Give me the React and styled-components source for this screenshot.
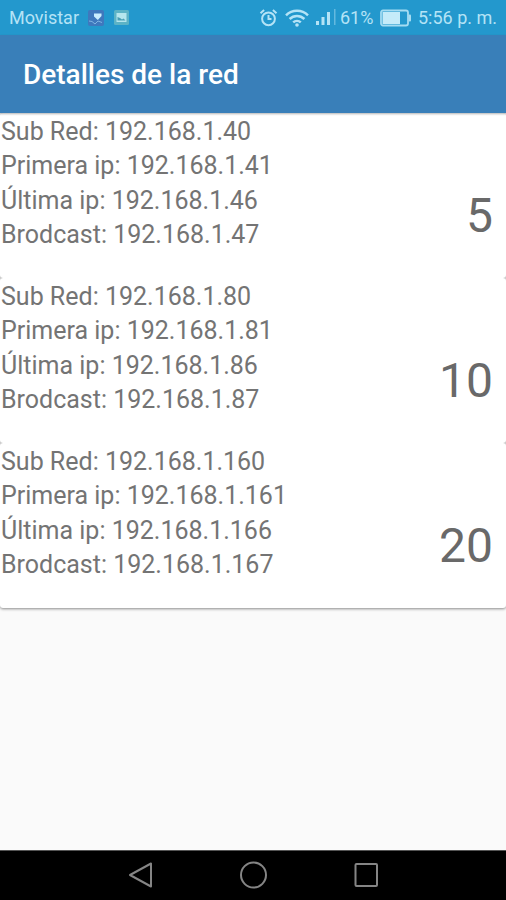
import React from 'react'
import styled, { createGlobalStyle } from 'styled-components'

const subnets = [
  { hosts: 5, network: '192.168.1.40', first: '192.168.1.41', last: '192.168.1.46', broadcast: '192.168.1.47' },
  { hosts: 10, network: '192.168.1.80', first: '192.168.1.81', last: '192.168.1.86', broadcast: '192.168.1.87' },
  { hosts: 20, network: '192.168.1.160', first: '192.168.1.161', last: '192.168.1.166', broadcast: '192.168.1.167' },
]

function PhoneStatus() {
  return (
    <StatusBar>
      <Carrier>Movistar</Carrier>
      <Notification width="16" height="16" viewBox="0 0 16 16">
        <rect width="16" height="16" rx="2" fill="#3f78bd" />
        <path d="M6 3.500h7.500v2.500L9.800 10 6 6.500z" fill="#c9edff" />
        <path d="M1 11l3 .5 3 2.500 3-3 4 1.500" fill="none" stroke="#7fb4e3" />
      </Notification>
      <Notification width="15" height="15" viewBox="0 0 15 15">
        <rect width="15" height="15" rx="1.500" fill="#5cb3c6" />
        <rect x="2.500" y="3" width="10" height="9" fill="#b5e6ee" />
        <path d="M3.500 10.500V7l2.500 1 2 1.500 1.500-1 2 2z" fill="#4a9fb5" />
      </Notification>
      <StatusRight>
        <svg width="20" height="20" viewBox="0 0 20 20" fill="none" stroke="#b4e3f6" strokeWidth="2">
          <circle cx="9.500" cy="10.800" r="6.400" />
          <path d="M9.500 7v4h3M1.500 5.200L5.100 2M17.500 5.200L13.900 2" />
        </svg>
        <Wifi width="24" height="18" viewBox="0 0 24 18" fill="none" stroke="#b4e3f6" strokeWidth="2.500">
          <path d="M1 6.300a15.800 15.800 0 0 1 22 0M4.600 10a10.500 10.500 0 0 1 14.800 0M8.200 13.400a5.500 5.500 0 0 1 7.600 0" />
          <circle cx="12" cy="16" r="1.800" fill="#b4e3f6" stroke="none" />
        </Wifi>
        <Signal width="21" height="17" viewBox="0 0 21 17" fill="#b4e3f6">
          <rect x="0" y="12" width="3" height="4" />
          <rect x="5.500" y="8" width="3" height="8" />
          <rect x="11" y="3" width="3" height="13" />
          <rect x="18" y="0" width="1.500" height="16" opacity="0.45" />
        </Signal>
        <Percent>61%</Percent>
        <Battery width="32" height="18" viewBox="0 0 32 18">
          <rect x="1" y="1.500" width="27" height="15" rx="2" fill="none" stroke="#a5dcf2" strokeWidth="1.800" />
          <rect x="2.500" y="3" width="17.500" height="12" fill="#c5ebf9" />
          <rect x="28.500" y="5.500" width="2.500" height="7" rx="1" fill="#a5dcf2" />
        </Battery>
        <Clock>5:56 p. m.</Clock>
      </StatusRight>
    </StatusBar>
  )
}

function SubnetCard({ subnet }) {
  return (
    <Card>
      <Lines>
        <Line>Sub Red: {subnet.network}</Line>
        <Line>Primera ip: {subnet.first}</Line>
        <Line>Última ip: {subnet.last}</Line>
        <Line>Brodcast: {subnet.broadcast}</Line>
      </Lines>
      <Hosts>{subnet.hosts}</Hosts>
    </Card>
  )
}

function App() {
  return (
    <Screen>
      <GlobalStyle />
      <PhoneStatus />
      <Toolbar>
        <Title>Detalles de la red</Title>
      </Toolbar>
      <List>
        {subnets.map(subnet => (
          <SubnetCard key={subnet.network} subnet={subnet} />
        ))}
      </List>
      <NavBar>
        <svg width="28" height="28" viewBox="0 0 28 28">
          <path d="M3 14L24 2.500v23z" />
        </svg>
        <svg width="28" height="28" viewBox="0 0 28 28">
          <circle cx="14.500" cy="14" r="12.500" />
        </svg>
        <svg width="28" height="28" viewBox="0 0 28 28">
          <rect x="3.500" y="3" width="21.500" height="22" rx="1" />
        </svg>
      </NavBar>
    </Screen>
  )
}

export default App

const GlobalStyle = createGlobalStyle`
  * {
    box-sizing: border-box;
  }
  body {
    margin: 0;
    font-family: Roboto, sans-serif;
  }
`
const Screen = styled.div`
  display: flex;
  flex-direction: column;
  height: 100vh;
  overflow: hidden;
  background: #fafafa;
`
const StatusBar = styled.div`
  display: flex;
  align-items: center;
  flex: none;
  height: 35px;
  padding: 0 8px 0 9px;
  background: #2398cd;
  color: #b4e3f6;
  font-size: 18px;
  line-height: 35px;
  white-space: nowrap;
`
const Carrier = styled.span`
  width: 79px;
`
const Notification = styled.svg`
  flex: none;
  margin-right: 10px;
`
const StatusRight = styled.div`
  display: flex;
  align-items: center;
  margin-left: auto;
`
const Wifi = styled.svg`
  margin-left: 6px;
`
const Signal = styled.svg`
  margin-left: 7px;
`
const Percent = styled.span`
  width: 39px;
  margin-left: 3px;
`
const Battery = styled.svg`
  margin-left: 1px;
`
const Clock = styled.span`
  width: 80px;
  margin-left: 6px;
`
const Toolbar = styled.header`
  display: flex;
  align-items: center;
  flex: none;
  height: 78px;
  padding: 2px 0 0 23px;
  background: #397fb9;
  box-shadow: 0 1px 2px rgba(0, 0, 0, 0.3);
  z-index: 1; // keeps the shadow above the first card
`
const Title = styled.h1`
  margin: 0;
  color: #fff;
  font-size: 28px;
  font-weight: 500;
  line-height: 32px;
`
const List = styled.main`
  flex: 1;
`
const Card = styled.section`
  display: flex;
  justify-content: space-between;
  height: 165px;
  padding: 2px 13px 0 1px;
  border-radius: 3px;
  background: #fff;
  box-shadow: 0 1px 3px rgba(0, 0, 0, 0.45);
  clip-path: inset(0 0 -5px 0); // only the bottom edge casts a shadow
`
const Lines = styled.div`
  display: flex;
  flex-direction: column;
`
const Line = styled.p`
  margin: 0;
  color: #747474;
  font-size: 25px;
  line-height: 34.3px;
`
const Hosts = styled.div`
  padding-top: 73px;
  color: #696969;
  font-size: 48px;
  line-height: 56px;
`
const NavBar = styled.nav`
  display: flex;
  justify-content: center;
  align-items: center;
  gap: 84.5px;
  flex: none;
  height: 50px;
  padding-bottom: 1px;
  border-top: 1px solid #555;
  background: #000;

  svg {
    fill: none;
    stroke: #858585;
    stroke-width: 2;
    stroke-linejoin: round;
  }
`
